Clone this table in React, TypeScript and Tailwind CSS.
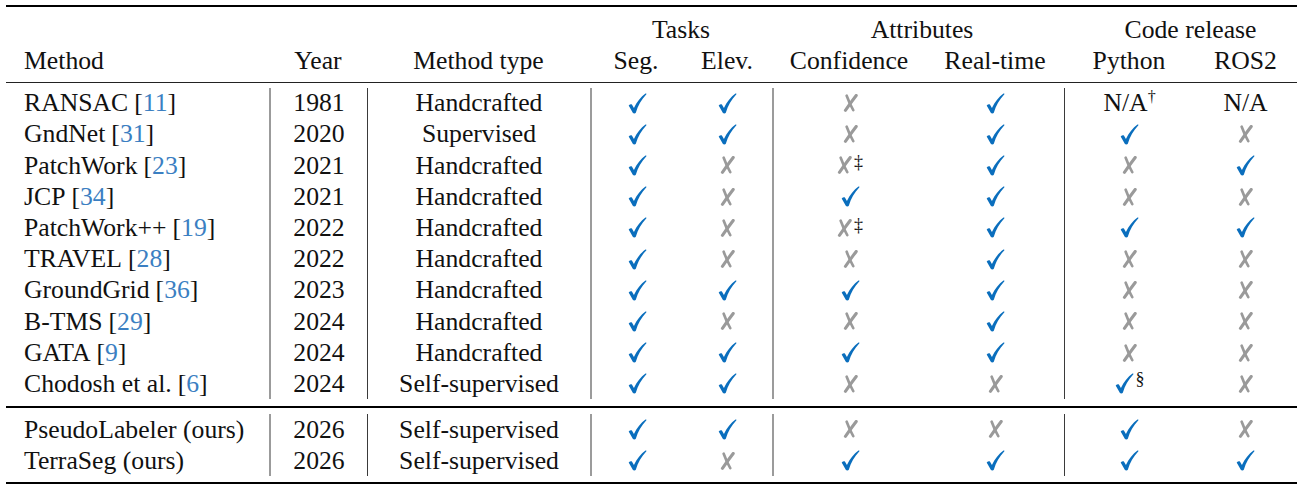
const GRID =
  "grid grid-cols-[263px_98px_223px_92px_90px_154px_138px_130px_103px]";

type Row = {
  name: string;
  cite?: string;
  year: string;
  kind: string;
  cells: string[];
};

const TOP: Row[] = [
  { name: "RANSAC", cite: "11", year: "1981", kind: "Handcrafted", cells: ["y", "y", "n", "y", "N/A†", "N/A"] },
  { name: "GndNet", cite: "31", year: "2020", kind: "Supervised", cells: ["y", "y", "n", "y", "y", "n"] },
  { name: "PatchWork", cite: "23", year: "2021", kind: "Handcrafted", cells: ["y", "n", "n‡", "y", "n", "y"] },
  { name: "JCP", cite: "34", year: "2021", kind: "Handcrafted", cells: ["y", "n", "y", "y", "n", "n"] },
  { name: "PatchWork++", cite: "19", year: "2022", kind: "Handcrafted", cells: ["y", "n", "n‡", "y", "y", "y"] },
  { name: "TRAVEL", cite: "28", year: "2022", kind: "Handcrafted", cells: ["y", "n", "n", "y", "n", "n"] },
  { name: "GroundGrid", cite: "36", year: "2023", kind: "Handcrafted", cells: ["y", "y", "y", "y", "n", "n"] },
  { name: "B-TMS", cite: "29", year: "2024", kind: "Handcrafted", cells: ["y", "n", "n", "y", "n", "n"] },
  { name: "GATA", cite: "9", year: "2024", kind: "Handcrafted", cells: ["y", "y", "y", "y", "n", "n"] },
  { name: "Chodosh et al.", cite: "6", year: "2024", kind: "Self-supervised", cells: ["y", "y", "n", "n", "y§", "n"] },
];

const OURS: Row[] = [
  { name: "PseudoLabeler (ours)", year: "2026", kind: "Self-supervised", cells: ["y", "y", "n", "n", "y", "n"] },
  { name: "TerraSeg (ours)", year: "2026", kind: "Self-supervised", cells: ["y", "n", "y", "y", "y", "y"] },
];

function Check() {
  return (
    <svg width="19" height="21" viewBox="0 0 18 20" className="inline-block">
      <path
        d="M0.6 12 C1.8 10.8 3 10.4 3.8 11.2 L5.6 14.2 C8.4 8.6 12.2 3.6 16.6 0.5 C17.3 0.2 17.8 0.9 17.3 1.5 C12.8 6.2 9.4 12 7.4 18.8 C7 19.7 5 19.8 4.5 18.8 Z"
        fill="#0a6ebd"
      />
    </svg>
  );
}

function Cross() {
  return (
    <svg width="15" height="18" viewBox="0 0 14 17" className="inline-block">
      <path d="M3.4 1.6 C5 6 7 10.8 9.6 15.2" stroke="#9a9a9a" strokeWidth="2.5" strokeLinecap="round" fill="none" />
      <path d="M12.4 1.4 C9 5.8 5.6 10.6 2.2 15.4" stroke="#9a9a9a" strokeWidth="2.9" strokeLinecap="round" fill="none" />
    </svg>
  );
}

function Mark({ v }: { v: string }) {
  if (v.startsWith("N/A")) {
    return (
      <span>
        N/A{v.endsWith("†") && <span className="relative -top-[9px] text-[16px]">†</span>}
      </span>
    );
  }
  const sup = v.slice(1);
  return (
    <span className="inline-flex items-start">
      {v[0] === "y" ? <Check /> : <Cross />}
      {sup && <span className="relative -top-[3px] ml-[2px] text-[18px] leading-none">{sup}</span>}
    </span>
  );
}

function BodyRow({ r }: { r: Row }) {
  const light = "border-l-2 border-[#9b9b9b]";
  const dark = "border-l border-[#3a3a3a]";
  return (
    <div className={`${GRID} h-[31.2px] items-stretch`}>
      <div className="flex items-center pl-[18px] whitespace-nowrap">
        {r.name}
        {r.cite && (
          <span className="ml-[6px]">
            [<span className="text-[#3b7fc2]">{r.cite}</span>]
          </span>
        )}
      </div>
      <div className={`flex items-center justify-center ${light}`}>{r.year}</div>
      <div className={`flex items-center justify-center ${dark}`}>{r.kind}</div>
      {r.cells.map((c, i) => (
        <div
          key={i}
          className={`flex items-center justify-center ${i === 0 || i === 2 ? light : ""} ${i === 4 ? dark : ""}`}
        >
          <Mark v={c} />
        </div>
      ))}
    </div>
  );
}

export default function App() {
  return (
    <div className="h-[490px] w-[1305px] bg-white font-[family-name:Liberation_Serif,Times_New_Roman,serif] text-[25.7px] leading-none text-[#111]">
      <div className="ml-[6px] w-[1291px] pt-[5px]">
        <div className="h-[2px] bg-black" />

        {/* header */}
        <div className={`${GRID} mt-[7px] h-[31px] items-center`}>
          <div className="col-span-3" />
          <div className="col-span-2 text-center">Tasks</div>
          <div className="col-span-2 pl-[8px] text-center">Attributes</div>
          <div className="col-span-2 pl-[20px] text-center">Code release</div>
        </div>
        <div className={`${GRID} h-[31px] items-center`}>
          <div className="pl-[18px]">Method</div>
          <div className="text-center">Year</div>
          <div className="text-center">Method type</div>
          <div className="text-center">Seg.</div>
          <div className="text-center">Elev.</div>
          <div className="text-center">Confidence</div>
          <div className="text-center">Real-time</div>
          <div className="text-center">Python</div>
          <div className="text-center">ROS2</div>
        </div>
        <div className="mt-[6px] h-px bg-[#222]" />

        <div className="pt-[4.5px]">
          {TOP.map((r) => (
            <BodyRow key={r.name} r={r} />
          ))}
        </div>

        <div className="mt-[7px] h-[1.5px] bg-black" />

        <div className="pt-[6px]">
          {OURS.map((r) => (
            <BodyRow key={r.name} r={r} />
          ))}
        </div>

        <div className="mt-[6px] h-[2px] bg-black" />
      </div>
    </div>
  );
}
